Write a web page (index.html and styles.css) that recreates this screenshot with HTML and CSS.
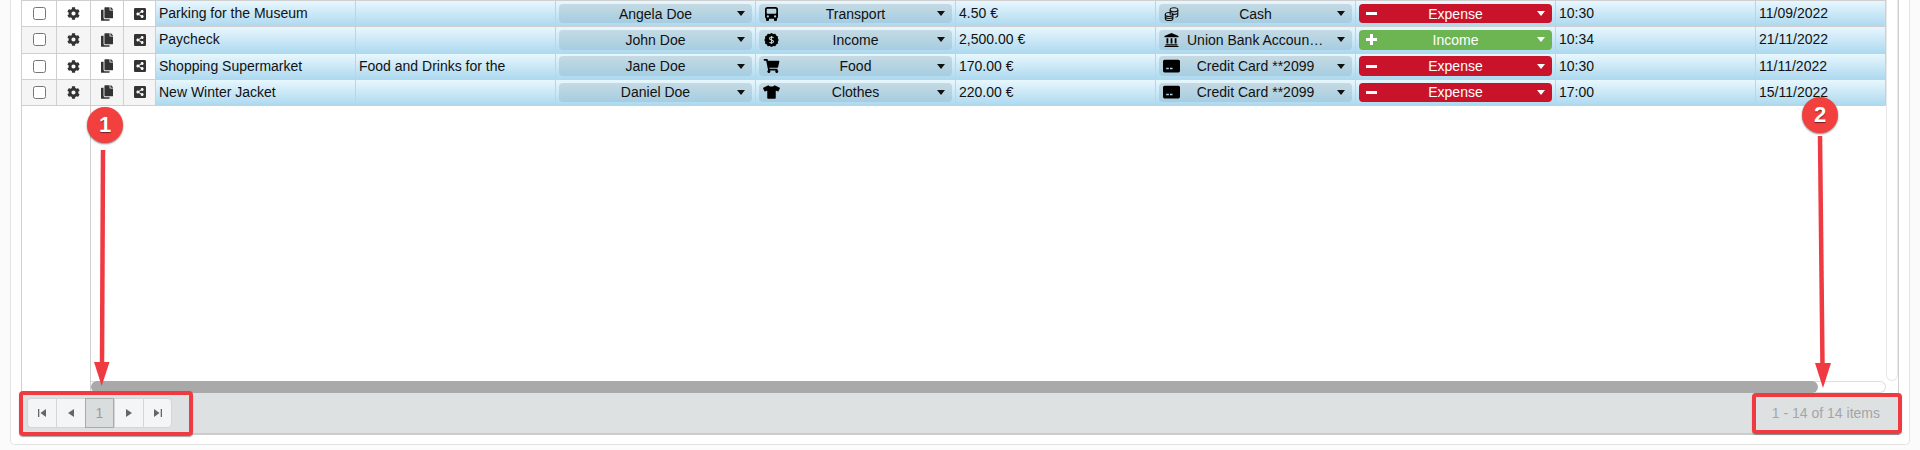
FILE: index.html
```html
<!DOCTYPE html>
<html lang="en">
<head>
    <meta charset="UTF-8">
    <meta name="viewport" content="width=device-width, initial-scale=1.0">
    <title>Transactions</title>
    <link rel="stylesheet" href="styles.css">
</head>
<body>
    <svg class="defs" width="0" height="0">
        <symbol id="i-cog" viewBox="0 0 512 512"><path d="M487.4 315.7l-42.6-24.6c4.3-23.2 4.3-47 0-70.2l42.6-24.6c4.9-2.8 7.1-8.6 5.5-14-11.1-35.6-30-67.8-54.7-94.6-3.8-4.1-10-5.1-14.8-2.3L380.8 110c-17.9-15.4-38.5-27.3-60.8-35.1V25.8c0-5.6-3.9-10.5-9.4-11.7-36.7-8.2-74.3-7.8-109.2 0-5.5 1.2-9.4 6.1-9.4 11.7V75c-22.2 7.9-42.8 19.8-60.8 35.1L88.7 85.5c-4.9-2.8-11-1.9-14.8 2.3-24.7 26.7-43.6 58.9-54.7 94.6-1.7 5.4.6 11.2 5.5 14L67.3 221c-4.3 23.2-4.3 47 0 70.2l-42.6 24.6c-4.9 2.8-7.1 8.6-5.5 14 11.1 35.6 30 67.8 54.7 94.6 3.8 4.1 10 5.1 14.8 2.3l42.6-24.6c17.9 15.4 38.5 27.3 60.8 35.1v49.2c0 5.6 3.9 10.5 9.4 11.7 36.7 8.2 74.3 7.8 109.2 0 5.5-1.2 9.4-6.1 9.4-11.7v-49.2c22.2-7.9 42.8-19.8 60.8-35.1l42.6 24.6c4.9 2.8 11 1.9 14.8-2.3 24.7-26.7 43.6-58.9 54.7-94.6 1.5-5.5-.7-11.3-5.6-14.1zM256 336c-44.1 0-80-35.9-80-80s35.9-80 80-80 80 35.9 80 80-35.9 80-80 80z"/></symbol>
        <symbol id="i-copy" viewBox="0 0 448 512"><path d="M320 448v40c0 13.255-10.745 24-24 24H24c-13.255 0-24-10.745-24-24V120c0-13.255 10.745-24 24-24h72v296c0 30.879 25.121 56 56 56h168zm0-344V0H152c-13.255 0-24 10.745-24 24v368c0 13.255 10.745 24 24 24h272c13.255 0 24-10.745 24-24V128H344c-13.2 0-24-10.8-24-24zm120.971-31.029L375.029 7.029A24 24 0 0 0 358.059 0H352v96h96v-6.059a24 24 0 0 0-7.029-16.97z"/></symbol>
        <symbol id="i-share" viewBox="0 32 448 448"><path d="M448 80v352c0 26.51-21.49 48-48 48H48c-26.51 0-48-21.49-48-48V80c0-26.51 21.49-48 48-48h352c26.51 0 48 21.49 48 48zM304 296c-14.562 0-27.823 5.561-37.783 14.671l-67.958-40.775a56.339 56.339 0 0 0 0-27.793l67.958-40.775C276.177 210.439 289.438 216 304 216c30.928 0 56-25.072 56-56s-25.072-56-56-56-56 25.072-56 56c0 4.797.605 9.453 1.74 13.897l-67.958 40.775C171.823 205.561 158.562 200 144 200c-30.928 0-56 25.072-56 56s25.072 56 56 56c14.562 0 27.823-5.561 37.783-14.671l67.958 40.775a56.088 56.088 0 0 0-1.74 13.897c0 30.928 25.072 56 56 56s56-25.072 56-56C360 321.072 334.928 296 304 296z"/></symbol>
        <symbol id="i-cart" viewBox="0 0 576 512"><path d="M528.12 301.319l47.273-208C578.806 78.301 567.391 64 551.99 64H159.208l-9.166-44.81C147.758 8.021 137.93 0 126.529 0H24C10.745 0 0 10.745 0 24v16c0 13.255 10.745 24 24 24h69.883l70.248 343.435C147.325 417.1 136 435.222 136 456c0 30.928 25.072 56 56 56s56-25.072 56-56c0-15.674-6.447-29.835-16.824-40h209.647C430.447 426.165 424 440.326 424 456c0 30.928 25.072 56 56 56s56-25.072 56-56c0-22.172-12.888-41.332-31.579-50.405l5.517-24.276c3.413-15.018-8.002-29.319-23.403-29.319H218.117l-6.545-32h293.145c11.206 0 20.92-7.754 23.403-18.681z"/></symbol>
        <symbol id="i-shirt" viewBox="0 0 640 512"><path d="M631.2 96.5L436.5 0C416.4 27.8 371.9 47.2 320 47.2S223.6 27.8 203.5 0L8.8 96.5c-7.9 4-11.1 13.6-7.2 21.5l57.2 114.5c4 7.9 13.6 11.1 21.5 7.2l56.6-27.7c10.6-5.2 23 2.5 23 14.4V480c0 17.7 14.3 32 32 32h256c17.7 0 32-14.3 32-32V226.3c0-11.8 12.4-19.6 23-14.4l56.6 27.7c7.9 4 17.5.8 21.5-7.2L638.3 118c4-7.9.8-17.6-7.1-21.5z"/></symbol>
        <symbol id="i-bus" viewBox="0 0 14 14"><path d="M3 0h8a2.5 2.5 0 0 1 2.5 2.5V10a1.5 1.5 0 0 1-1 1.4V13a1 1 0 0 1-1 1h-1a1 1 0 0 1-1-1v-1.2H4.500V13a1 1 0 0 1-1 1h-1a1 1 0 0 1-1-1v-1.600a1.500 1.500 0 0 1-1-1.400V2.500A2.500 2.500 0 0 1 3 0zM3 1.800a.8.8 0 0 0-.8.8V6a.8.8 0 0 0 .8.8h8a.8.8 0 0 0 .8-.8V2.600a.8.8 0 0 0-.8-.8zM3.400 8.300a1.100 1.100 0 1 0 0 2.200 1.100 1.100 0 0 0 0-2.200zM10.600 8.300a1.100 1.100 0 1 0 0 2.200 1.100 1.100 0 0 0 0-2.200z" fill-rule="evenodd"/></symbol>
        <symbol id="i-money" viewBox="0 0 14 14"><path d="M7 0l1.800 1 2-.2.9 1.800 1.800.9-.2 2L14.300 7l-1 1.500.2 2-1.800.9-.9 1.800-2-.2L7 14l-1.800-1-2 .2-.9-1.800-1.800-.9.2-2L-.3 7l1-1.500-.2-2 1.800-.9.9-1.800 2 .2z"/><path class="money-sign" d="M9 4.900C8.600 4.300 7.900 4 7 4c-1.200 0-2 .6-2 1.500C5 7.600 9 6.400 9 8.500 9 9.400 8.200 10 7 10c-.9 0-1.600-.3-2-.9M7 2.900v8.200"/></symbol>
        <symbol id="i-coins" viewBox="0 0 14 14"><g class="coins-line"><ellipse cx="9.500" cy="2.700" rx="3.800" ry="2"/><path d="M5.700 2.700v5.500M13.300 2.700v5.800c0 .8-.9 1.400-2.300 1.700M13.300 5.600c0 .9-1.500 1.800-3.800 1.800-1 0-1.900-.2-2.500-.5"/><ellipse cx="4.600" cy="7.500" rx="3.800" ry="2"/><path d="M.8 7.500v4.200c0 1.100 1.700 1.900 3.800 1.900s3.800-.8 3.800-1.900V7.500M.8 9.600c0 1.100 1.700 1.900 3.800 1.900s3.800-.8 3.800-1.900"/></g></symbol>
        <symbol id="i-bank" viewBox="0 0 14 14"><path d="M7 0l7 3v1.300H0V3zM1 11.300h12V12.500H1zM0 13h14v1H0zM2 5.200h1.800v5.300H2zM6.100 5.200h1.800v5.300H6.100zM10.200 5.200H12v5.300h-1.800z"/></symbol>
        <symbol id="i-card" viewBox="0 0 16 12"><path d="M1.500 0h13A1.500 1.500 0 0 1 16 1.500v9a1.500 1.500 0 0 1-1.500 1.500h-13A1.500 1.500 0 0 1 0 10.500v-9A1.500 1.500 0 0 1 1.500 0zM3 7.700v1.300h2.500V7.700zM6.500 7.700v1.300H9V7.700z" fill-rule="evenodd"/></symbol>
        <symbol id="i-first" viewBox="0 0 8 8"><path d="M0 0h1.300v8H0zM8 0v8L2.500 4z"/></symbol>
        <symbol id="i-prev" viewBox="0 0 6 8"><path d="M6 0v8L0 4z"/></symbol>
        <symbol id="i-next" viewBox="0 0 6 8"><path d="M0 0v8l6-4z"/></symbol>
        <symbol id="i-last" viewBox="0 0 8 8"><path d="M8 0H6.700v8H8zM0 0v8l5.500-4z"/></symbol>
    </svg>

    <div class="card">
        <div class="grid">
            <div class="grid-panes">
                <div class="locked-pane">
                    <table class="table locked-table">
                        <colgroup><col class="col-check"><col class="col-cog"></colgroup>
                        <tr>
                            <td class="cell-tool"><input type="checkbox" class="row-check"></td>
                            <td class="cell-tool"><svg class="tool-icon icon-cog"><use href="#i-cog"/></svg></td>
                        </tr>
                        <tr class="row-alt">
                            <td class="cell-tool"><input type="checkbox" class="row-check"></td>
                            <td class="cell-tool"><svg class="tool-icon icon-cog"><use href="#i-cog"/></svg></td>
                        </tr>
                        <tr>
                            <td class="cell-tool"><input type="checkbox" class="row-check"></td>
                            <td class="cell-tool"><svg class="tool-icon icon-cog"><use href="#i-cog"/></svg></td>
                        </tr>
                        <tr class="row-alt">
                            <td class="cell-tool"><input type="checkbox" class="row-check"></td>
                            <td class="cell-tool"><svg class="tool-icon icon-cog"><use href="#i-cog"/></svg></td>
                        </tr>
                    </table>
                </div>
                <div class="main-pane">
                    <div class="main-content">
                        <table class="table main-table">
                            <colgroup>
                                <col class="col-copy"><col class="col-share">
                                <col class="col-data"><col class="col-data"><col class="col-data"><col class="col-data">
                                <col class="col-data"><col class="col-data"><col class="col-data"><col class="col-data">
                                <col class="col-date">
                            </colgroup>
                            <tr>
                                <td class="cell-tool"><svg class="tool-icon icon-copy"><use href="#i-copy"/></svg></td>
                                <td class="cell-tool"><svg class="tool-icon icon-share"><use href="#i-share"/></svg></td>
                                <td>Parking for the Museum</td>
                                <td></td>
                                <td class="cell-drop"><div class="drop"><span></span><span class="drop-text">Angela Doe</span><i class="caret"></i></div></td>
                                <td class="cell-drop"><div class="drop"><svg class="drop-icon"><use href="#i-bus"/></svg><span class="drop-text">Transport</span><i class="caret"></i></div></td>
                                <td>4.50 €</td>
                                <td class="cell-drop"><div class="drop"><svg class="drop-icon"><use href="#i-coins"/></svg><span class="drop-text">Cash</span><i class="caret"></i></div></td>
                                <td class="cell-drop"><div class="drop drop-expense"><i class="sign sign-minus"></i><span class="drop-text">Expense</span><i class="caret"></i></div></td>
                                <td>10:30</td>
                                <td>11/09/2022</td>
                            </tr>
                            <tr>
                                <td class="cell-tool alt"><svg class="tool-icon icon-copy"><use href="#i-copy"/></svg></td>
                                <td class="cell-tool alt"><svg class="tool-icon icon-share"><use href="#i-share"/></svg></td>
                                <td>Paycheck</td>
                                <td></td>
                                <td class="cell-drop"><div class="drop"><span></span><span class="drop-text">John Doe</span><i class="caret"></i></div></td>
                                <td class="cell-drop"><div class="drop"><svg class="drop-icon"><use href="#i-money"/></svg><span class="drop-text">Income</span><i class="caret"></i></div></td>
                                <td>2,500.00 €</td>
                                <td class="cell-drop"><div class="drop"><svg class="drop-icon"><use href="#i-bank"/></svg><span class="drop-text">Union Bank Account Main</span><i class="caret"></i></div></td>
                                <td class="cell-drop"><div class="drop drop-income"><i class="sign sign-plus"></i><span class="drop-text">Income</span><i class="caret"></i></div></td>
                                <td>10:34</td>
                                <td>21/11/2022</td>
                            </tr>
                            <tr>
                                <td class="cell-tool"><svg class="tool-icon icon-copy"><use href="#i-copy"/></svg></td>
                                <td class="cell-tool"><svg class="tool-icon icon-share"><use href="#i-share"/></svg></td>
                                <td>Shopping Supermarket</td>
                                <td>Food and Drinks for the</td>
                                <td class="cell-drop"><div class="drop"><span></span><span class="drop-text">Jane Doe</span><i class="caret"></i></div></td>
                                <td class="cell-drop"><div class="drop"><svg class="drop-icon icon-wide"><use href="#i-cart"/></svg><span class="drop-text">Food</span><i class="caret"></i></div></td>
                                <td>170.00 €</td>
                                <td class="cell-drop"><div class="drop"><svg class="drop-icon icon-wide"><use href="#i-card"/></svg><span class="drop-text">Credit Card **2099</span><i class="caret"></i></div></td>
                                <td class="cell-drop"><div class="drop drop-expense"><i class="sign sign-minus"></i><span class="drop-text">Expense</span><i class="caret"></i></div></td>
                                <td>10:30</td>
                                <td>11/11/2022</td>
                            </tr>
                            <tr>
                                <td class="cell-tool alt"><svg class="tool-icon icon-copy"><use href="#i-copy"/></svg></td>
                                <td class="cell-tool alt"><svg class="tool-icon icon-share"><use href="#i-share"/></svg></td>
                                <td>New Winter Jacket</td>
                                <td></td>
                                <td class="cell-drop"><div class="drop"><span></span><span class="drop-text">Daniel Doe</span><i class="caret"></i></div></td>
                                <td class="cell-drop"><div class="drop"><svg class="drop-icon icon-wide"><use href="#i-shirt"/></svg><span class="drop-text">Clothes</span><i class="caret"></i></div></td>
                                <td>220.00 €</td>
                                <td class="cell-drop"><div class="drop"><svg class="drop-icon icon-wide"><use href="#i-card"/></svg><span class="drop-text">Credit Card **2099</span><i class="caret"></i></div></td>
                                <td class="cell-drop"><div class="drop drop-expense"><i class="sign sign-minus"></i><span class="drop-text">Expense</span><i class="caret"></i></div></td>
                                <td>17:00</td>
                                <td>15/11/2022</td>
                            </tr>
                        </table>
                        <div class="vscroll"></div>
                    </div>
                    <div class="hscroll"><div class="hscroll-thumb"></div></div>
                </div>
            </div>
            <div class="pager">
                <div class="pager-buttons">
                    <button class="pager-btn"><svg class="pager-icon pager-icon-edge"><use href="#i-first"/></svg></button>
                    <button class="pager-btn"><svg class="pager-icon"><use href="#i-prev"/></svg></button>
                    <button class="pager-btn pager-current">1</button>
                    <button class="pager-btn"><svg class="pager-icon"><use href="#i-next"/></svg></button>
                    <button class="pager-btn"><svg class="pager-icon pager-icon-edge"><use href="#i-last"/></svg></button>
                </div>
                <span class="pager-info">1 - 14 of 14 items</span>
            </div>
        </div>
    </div>

    <!-- annotations over the screenshot -->
    <div class="note-box note-box-1"></div>
    <div class="note-box note-box-2"></div>
    <svg class="note-arrows" width="1920" height="450">
        <path d="M103 150L102 366" class="arrow-line"/>
        <path d="M94 362L109.500 362L101.700 386z" class="arrow-head"/>
        <path d="M1820 136L1822.500 366" class="arrow-line"/>
        <path d="M1815 363L1831 363L1823 388z" class="arrow-head"/>
    </svg>
    <div class="note-badge note-badge-1">1</div>
    <div class="note-badge note-badge-2">2</div>
</body>
</html>
```

FILE: styles.css
```css
body {
    margin: 0;
    background: #fbfbfb;
    font-family: "Liberation Sans", Arial, sans-serif;
    font-size: 14px;
    color: #111;
    overflow: hidden;
}
.defs {
    display: block;
    height: 0;
}
.card {
    width: 1900px;
    height: 445px;
    margin-left: 10px;
    padding: 0 10px 10px;
    box-sizing: border-box;
    background: #fff;
    border: 1px solid #e2e2e2;
    border-top: none;
    border-radius: 0 0 5px 5px;
}
.grid {
    display: flex;
    flex-direction: column;
    height: 435px;
    box-sizing: border-box;
    border: 1px solid #cfcfcf;
    border-top: none;
}
.grid-panes {
    display: flex;
    height: 393px;
}

/* panes */
.locked-pane {
    width: 69px;
    box-sizing: border-box;
    border-right: 1px solid #cfcfcf;
}
.main-pane {
    display: flex;
    flex-direction: column;
    width: 1807px;
}
.main-content {
    display: flex;
    height: 381px;
}
.vscroll {
    width: 12px;
    box-sizing: border-box;
    border: 1px solid #e8e8e8;
    border-top: none;
    border-radius: 0 0 6px 6px;
}
.hscroll {
    width: 1795px;
    height: 12px;
    box-sizing: border-box;
    border: 1px solid #ddd;
    border-left: none;
    border-radius: 0 6px 6px 0;
}
.hscroll-thumb {
    width: 1727px;
    height: 12px;
    margin-top: -1px;
    background: #a9a9a9;
    border-radius: 6px;
}

/* tables */
.table {
    table-layout: fixed;
    border-collapse: separate;
    border-spacing: 0;
    height: 105px;
    border-top: 1px solid #cfcfcf;
    align-self: flex-start;
}
.locked-table {
    width: 68px;
}
.main-table {
    width: 1795px;
    flex: none;
}
.col-check { width: 35px; }
.col-cog { width: 33px; }
.col-copy { width: 33px; }
.col-share { width: 32px; }
.col-data { width: 200px; }
.col-date { width: 130px; }

.table tr {
    height: 26.25px;
}
.table td {
    padding: 0 3px 1px;
    box-sizing: border-box;
    border-right: 1px solid #cfcfcf;
    border-bottom: 1px solid #cfcfcf;
    background: linear-gradient(#e8f7fe, #aed9ef);
    white-space: nowrap;
    overflow: hidden;
    vertical-align: middle;
}
.locked-table td:last-child {
    border-right: none;
}
.table td.cell-tool {
    padding: 0;
    background: #fff;
    text-align: center;
}
.table .row-alt td.cell-tool,
.table td.cell-tool.alt {
    background: #f5f5f5;
}
.row-check {
    display: block;
    width: 13px;
    height: 13px;
    margin: 0 auto;
}
.tool-icon {
    display: block;
    margin: 0 auto;
    fill: #333;
}
.icon-cog { width: 13px; height: 13px; }
.icon-copy { width: 12px; height: 14px; }
.icon-share { width: 12px; height: 12px; }

/* dropdowns */
.table td.cell-drop {
    padding: 0 3px;
}
.drop {
    display: grid;
    grid-template-columns: 28px minmax(0, 1fr) 28px;
    align-items: center;
    height: 19.5px;
    background: linear-gradient(#c5dae3, #a5cde1);
    border-radius: 4px;
    text-align: center;
}
.drop-text {
    overflow: hidden;
    text-overflow: ellipsis;
    white-space: nowrap;
}
.drop-icon {
    width: 15px;
    height: 14px;
    margin-left: 5px;
    fill: #000;
}
.icon-wide {
    width: 17px;
    margin-left: 4px;
}
.money-sign {
    fill: none;
    stroke: #b8d4e0;
    stroke-width: 1.100;
}
.coins-line {
    fill: none;
    stroke: #111;
    stroke-width: 1.100;
}
.caret {
    justify-self: end;
    width: 0;
    height: 0;
    margin-right: 7px;
    border-top: 5px solid #111;
    border-left: 4.500px solid transparent;
    border-right: 4.500px solid transparent;
}
.drop-expense {
    background: #c8132b;
    color: #fff;
}
.drop-income {
    background: #6db553;
    color: #fff;
}
.drop-expense .caret,
.drop-income .caret {
    border-top-color: #fff;
}
.sign {
    position: relative;
    display: block;
    width: 11px;
    height: 3px;
    margin-left: 7px;
    background: #fff;
}
.sign-plus::after {
    content: "";
    position: absolute;
    left: 4px;
    top: -4px;
    width: 3px;
    height: 11px;
    background: #fff;
}

/* pager */
.pager {
    display: flex;
    align-items: center;
    justify-content: space-between;
    height: 41px;
    box-sizing: border-box;
    padding: 0 18px 1px 5px;
    background: #dee1e2;
    border-bottom: 1px solid #cacaca;
}
.pager-buttons {
    display: flex;
    height: 30px;
}
.pager-btn {
    display: flex;
    align-items: center;
    justify-content: center;
    width: 29px;
    height: 30px;
    padding: 0;
    font: 14px "Liberation Sans", Arial, sans-serif;
    background: #f3f5f7;
    border: 1px solid #d3d5d7;
    border-right: none;
}
.pager-btn:first-child {
    border-radius: 4px 0 0 4px;
}
.pager-btn:last-child {
    border-right: 1px solid #d3d5d7;
    border-radius: 0 4px 4px 0;
}
.pager-current {
    color: #9a9c9e;
    background: #d9dddd;
    border: 1px solid #a9abab;
}
.pager-icon {
    width: 6px;
    height: 8px;
    fill: #666;
}
.pager-icon-edge {
    width: 8px;
}
.pager-info {
    color: #a3a5a7;
}

/* annotations */
.note-box {
    position: absolute;
    box-sizing: border-box;
    border: 4px solid #ef3a42;
    border-radius: 4px;
    box-shadow: 0 1px 1px rgba(0, 0, 0, 0.35);
}
.note-box-1 {
    left: 19px;
    top: 391px;
    width: 174px;
    height: 45px;
}
.note-box-2 {
    left: 1752px;
    top: 393px;
    width: 150px;
    height: 41px;
}
.note-arrows {
    position: absolute;
    left: 0;
    top: 0;
}
.arrow-line {
    fill: none;
    stroke: #ef3a42;
    stroke-width: 4.500;
}
.arrow-head {
    fill: #ef3a42;
}
.note-badge {
    position: absolute;
    width: 36px;
    height: 36px;
    font-size: 22px;
    font-weight: bold;
    line-height: 36px;
    text-align: center;
    color: #fff;
    text-shadow: 0 1px 1px rgba(0, 0, 0, 0.5);
    background: #f2403f;
    border-radius: 50%;
    box-shadow: 0 1px 2px rgba(0, 0, 0, 0.5);
}
.note-badge-1 {
    left: 87px;
    top: 107px;
}
.note-badge-2 {
    left: 1802px;
    top: 97px;
}
```
